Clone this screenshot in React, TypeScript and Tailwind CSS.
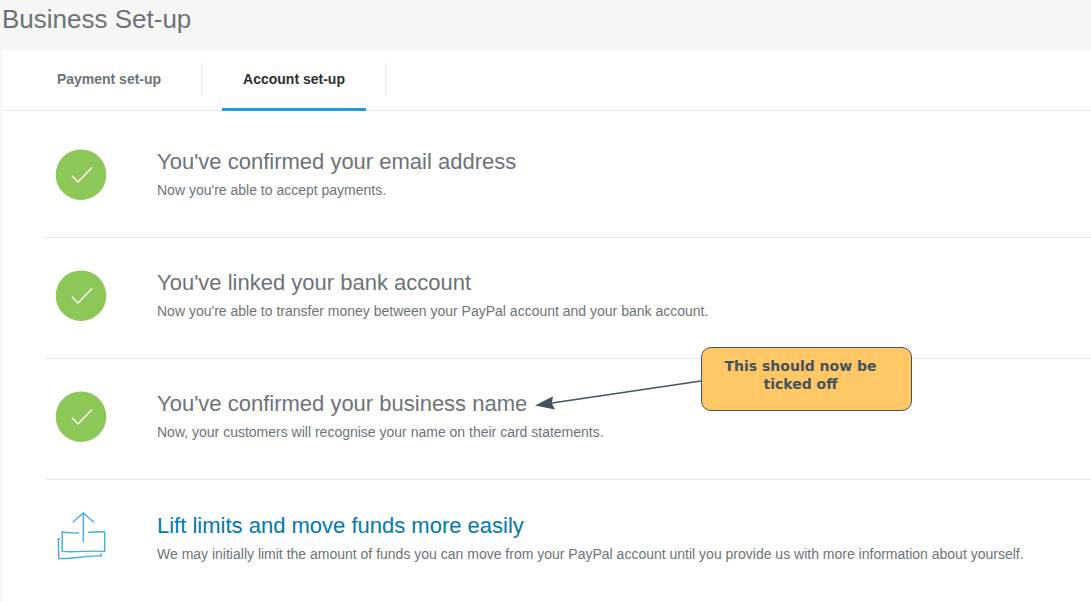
import React from 'react';

interface SetupStep {
  id: string;
  title: string;
  description: string;
  note?: string;
}

const completedSteps: SetupStep[] = [
  {
    id: 'email',
    title: "You've confirmed your email address",
    description: "Now you're able to accept payments.",
  },
  {
    id: 'bank',
    title: "You've linked your bank account",
    description:
      "Now you're able to transfer money between your PayPal account and your bank account.",
  },
  {
    id: 'name',
    title: "You've confirmed your business name",
    description: 'Now, your customers will recognise your name on their card statements.',
    note: 'This should now be ticked off',
  },
];

const CheckIcon = () => (
  <svg width="52" height="52" viewBox="0 0 52 52" fill="none" className="flex-none" aria-hidden="true">
    <circle cx="26" cy="25.7" r="25.3" fill="#8cc857" />
    <path d="M17 26.7l6 6.3L37 18.5" stroke="#fff" strokeWidth="1.4" />
  </svg>
);

const LiftIcon = () => (
  <svg
    width="52"
    height="52"
    viewBox="0 0 52 52"
    fill="none"
    stroke="#45aee0"
    strokeWidth="1.4"
    className="flex-none"
    aria-hidden="true"
  >
    <path d="M28.3 34.3V5M17.8 14.2L28.3 5l10.5 9.2" />
    <path d="M24 24.8c-6 .4-12-.2-16.8-.8v19.4c15 1.2 28-1.2 42.5 0V24c-6-.6-11 0-16.7.4" />
    <path d="M5 30.7H3.3l.5 19.8c14 1.2 28-3.4 42.3-2.5v-2.8" />
  </svg>
);

const Callout = ({ text }: { text: string }) => (
  <div className="absolute -top-3 left-[490px] flex">
    <svg width="166" height="64" viewBox="0 0 166 64" className="flex-none" aria-hidden="true">
      <path d="M17 56L166 34" stroke="#43545d" strokeWidth="1.5" />
      <path d="M0 58.5L18 49.3l-1.2 6.9L20 62.5z" fill="#43545d" />
    </svg>
    <p className="h-16 w-[211px] rounded-[10px] border border-[#43545d] bg-[#ffc766] pt-[9px] pr-7 pl-4 text-center font-['DejaVu_Sans',sans-serif] text-sm leading-[18px] font-bold text-[#43545d]">
      {text}
    </p>
  </div>
);

const App = () => {
  return (
    <div className="min-h-screen bg-[#f5f7f7] font-['Liberation_Sans',Arial,sans-serif] text-[#6c7378]">
      <header className="px-0.5 pb-3">
        <h1 className="text-[26px] leading-[39px]">Business Set-up</h1>
      </header>
      <main className="ml-0.5 bg-white pb-10">
        <nav className="flex border-b border-[#e5e8e8] pl-[34px] text-sm font-bold">
          <div className="flex items-start">
            <button className="h-14 w-[146px] px-5">Payment set-up</button>
            <span className="mt-[11px] ml-[19px] h-[34px] w-px bg-[#e5e8e8]" />
          </div>
          <div className="ml-5 flex items-start">
            <button
              className="-mb-px h-[60px] w-36 border-b-3 border-[#1f9cdb] pb-0.5 text-[#2c2e2f]"
              aria-current="page"
            >
              Account set-up
            </button>
            <span className="mt-[11px] ml-[19px] h-[34px] w-px bg-[#e5e8e8]" />
          </div>
        </nav>
        <ul className="ml-[43px] pt-[6px]">
          {completedSteps.map((step) => (
            <li
              key={step.id}
              className="relative flex items-start gap-[50px] border-b border-[#e5e8e8] pt-8 pb-9 pl-[10px]"
            >
              <CheckIcon />
              <div>
                <h2 className="text-[22px] leading-[26px]">{step.title}</h2>
                <p className="mt-[5px] text-sm leading-5">{step.description}</p>
              </div>
              {step.note && <Callout text={step.note} />}
            </li>
          ))}
          <li className="flex items-start gap-[50px] pt-7 pl-[10px]">
            <LiftIcon />
            <div className="pt-[5px]">
              <h2 className="text-[22px] leading-[26px]">
                <a href="#lift-limits" className="text-[#0079ad]">
                  Lift limits and move funds more easily
                </a>
              </h2>
              <p className="mt-[5px] text-sm leading-5">
                We may initially limit the amount of funds you can move from your PayPal account
                until you provide us with more information about yourself.
              </p>
            </div>
          </li>
        </ul>
      </main>
    </div>
  );
};

export default App;
